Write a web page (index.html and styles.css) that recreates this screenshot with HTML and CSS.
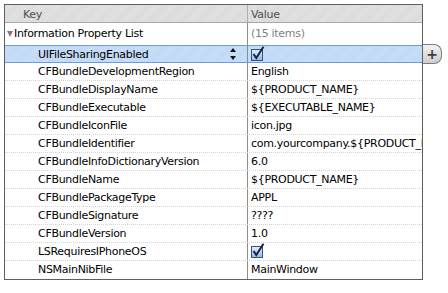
FILE: index.html
```html
<!DOCTYPE html>
<html lang="en">
<head>
    <meta charset="UTF-8">
    <title>Info.plist</title>
    <link rel="stylesheet" href="styles.css">
</head>
<body>

<!-- Property list editor -->
<div class="plist">
    <div class="row head">
        <div class="key">Key</div>
        <div class="val">Value</div>
    </div>

    <div class="row root">
        <div class="key"><span class="tri"></span>Information Property List</div>
        <div class="val muted">(15 items)</div>
    </div>

    <div class="row sel">
        <div class="key child">UIFileSharingEnabled
            <svg class="stepper" width="6" height="12" viewBox="0 0 6 12"><path d="M3 0 L6 4 L0 4 Z M0 8 L6 8 L3 12 Z" fill="#111"/></svg>
        </div>
        <div class="val">
            <svg class="check" width="14" height="15" viewBox="0 0 14 15">
                <defs><linearGradient id="cb1" x1="0" y1="0" x2="0" y2="1"><stop offset="0" stop-color="#e6f0fc"/><stop offset="1" stop-color="#8fb7ea"/></linearGradient></defs>
                <rect x="0.5" y="3.5" width="11" height="11" fill="url(#cb1)" stroke="#34547e"/>
                <path d="M2.5 8 L5.3 12 L12.5 0.8" fill="none" stroke="#18263d" stroke-width="2"/>
            </svg>
        </div>
        <button class="add">+</button>
    </div>

    <div class="row"><div class="key child">CFBundleDevelopmentRegion</div><div class="val">English</div></div>
    <div class="row"><div class="key child">CFBundleDisplayName</div><div class="val">${PRODUCT_NAME}</div></div>
    <div class="row"><div class="key child">CFBundleExecutable</div><div class="val">${EXECUTABLE_NAME}</div></div>
    <div class="row"><div class="key child">CFBundleIconFile</div><div class="val">icon.jpg</div></div>
    <div class="row"><div class="key child">CFBundleIdentifier</div><div class="val">com.yourcompany.${PRODUCT_NAME:rfc1034identifier}</div></div>
    <div class="row"><div class="key child">CFBundleInfoDictionaryVersion</div><div class="val">6.0</div></div>
    <div class="row"><div class="key child">CFBundleName</div><div class="val">${PRODUCT_NAME}</div></div>
    <div class="row"><div class="key child">CFBundlePackageType</div><div class="val">APPL</div></div>
    <div class="row"><div class="key child">CFBundleSignature</div><div class="val">????</div></div>
    <div class="row"><div class="key child">CFBundleVersion</div><div class="val">1.0</div></div>
    <div class="row">
        <div class="key child">LSRequiresIPhoneOS</div>
        <div class="val">
            <svg class="check" width="14" height="15" viewBox="0 0 14 15">
                <defs><linearGradient id="cb2" x1="0" y1="0" x2="0" y2="1"><stop offset="0" stop-color="#e6f0fc"/><stop offset="1" stop-color="#8fb7ea"/></linearGradient></defs>
                <rect x="0.5" y="3.5" width="11" height="11" fill="url(#cb2)" stroke="#34547e"/>
                <path d="M2.5 8 L5.3 12 L12.5 0.8" fill="none" stroke="#18263d" stroke-width="2"/>
            </svg>
        </div>
    </div>
    <div class="row last"><div class="key child">NSMainNibFile</div><div class="val">MainWindow</div></div>
</div>

</body>
</html>
```

FILE: styles.css
```css
* {
    margin: 0;
    padding: 0;
    box-sizing: border-box;
}

body {
    background: #fff;
    color: #000;
    font-family: 'DejaVu Sans', sans-serif;
    font-size: 11px;
    letter-spacing: -0.3px;
}

/* Таблиця */
.plist {
    width: 419px;
    margin: 4px 0 0 4px;
    border: 1px solid #5e5e5e;
}

.row {
    position: relative;
    display: grid;
    grid-template-columns: 243px 1fr;
    height: 18px;
    border-bottom: 1px dotted #d4d4d4;
    line-height: 17px;
}

.row.last {
    border-bottom: none;
    height: 18px;
}

.key,
.val {
    white-space: nowrap;
    overflow: hidden;
}

.key {
    position: relative;
    border-right: 1px solid #8c8c8c;
}

.val {
    padding-left: 3px;
}

/* Шапка */
.row.head {
    height: 18px;
    line-height: 19px;
    background: repeating-linear-gradient(135deg, #e2e2e2 0 1px, #dadada 1px 2px);
    border-bottom: 1px solid #a8a8a8;
    color: #4f4f4f;
}

.head .key {
    padding-left: 18px;
    border-right-color: #b0b0b0;
}

/* Корінь */
.row.root {
    height: 22px;
    line-height: 22px;
    border-bottom: none;
}

.root .key {
    padding-left: 2px;
}

.tri {
    display: inline-block;
    width: 0;
    height: 0;
    border-left: 3.5px solid transparent;
    border-right: 3.5px solid transparent;
    border-top: 6px solid #7b7b7b;
    margin-right: 1px;
    vertical-align: 0;
}

.muted {
    color: #7f7f7f;
}

.child {
    padding-left: 33px;
}

/* Виділений рядок */
.row.sel {
    background: repeating-linear-gradient(135deg, #c9def8 0 1px, #c1d8f5 1px 2px);
    border-top: 1px solid #6b9be0;
    border-bottom: 1px solid #6b9be0;
}

.stepper {
    position: absolute;
    right: 11px;
    top: 2px;
}

.check {
    display: block;
}

.add {
    position: absolute;
    left: 100%;
    top: -2px;
    width: 19px;
    height: 20px;
    margin-left: 1px;
    border: 1px solid #7c7c7c;
    border-left: none;
    border-radius: 0 8px 8px 0;
    background: linear-gradient(#f3f3f3, #cdcdcd);
    color: #3e3e3e;
    font-family: 'DejaVu Sans', sans-serif;
    font-size: 14px;
    font-weight: bold;
    line-height: 17px;
    text-align: center;
}
```
